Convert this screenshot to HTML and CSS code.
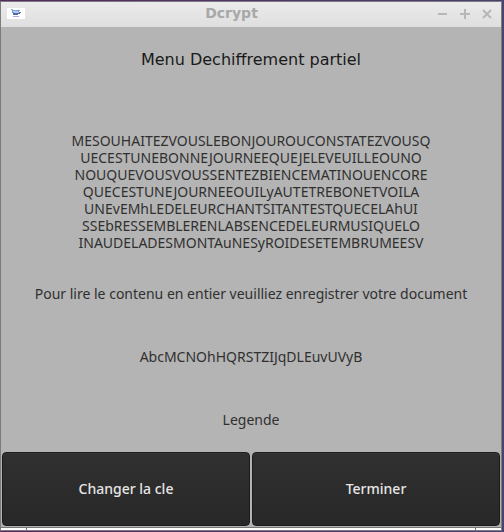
FILE: index.html
```html
<!DOCTYPE html>
<html lang="fr">
<head>
<meta charset="utf-8">
<title>Dcrypt</title>
<link rel="stylesheet" href="styles.css">
</head>
<body>
<div class="window">
  <header class="titlebar">
    <svg class="app-icon" viewBox="0 0 18 11" aria-hidden="true">
      <path fill="#fff" d="M0 0h18v11H0z"/>
      <path fill="#82a9df" d="M4 1h2v1h7v1H5V2H4z"/>
      <path fill="#b5cce7" d="M5 3h7v2H5z"/>
      <path fill="#6f9bd2" d="M5 3h1v1h1v1H5zM9 2h3v2h-1V3H9z"/>
      <path fill="#5866b0" d="M6 5h6V4h2v1h-1v1h-2v1H6z"/>
      <path fill="#a8afe0" d="M6 8h6v1H6z"/>
    </svg>
    <h1 class="title">Dcrypt</h1>
    <div class="controls">
      <button class="control" type="button" aria-label="Réduire"><svg viewBox="0 0 10 10"><path d="M0 5h9"/></svg></button>
      <button class="control" type="button" aria-label="Agrandir"><svg viewBox="0 0 10 10"><path d="M0 5h10M5 0v10"/></svg></button>
      <button class="control" type="button" aria-label="Fermer"><svg viewBox="0 0 10 10"><path d="M1 1l8 8M9 1l-8 8"/></svg></button>
    </div>
  </header>
  <main class="content">
    <h2 class="heading">Menu Dechiffrement partiel</h2>
    <p class="message">MESOUHAITEZVOUSLEBONJOUROUCONSTATEZVOUSQ<br>UECESTUNEBONNEJOURNEEQUEJELEVEUILLEOUNO<br>NOUQUEVOUSVOUSSENTEZBIENCEMATINOUENCORE<br>QUECESTUNEJOURNEEOUILyAUTETREBONETVOILA<br>UNEvEMhLEDELEURCHANTSITANTESTQUECELAhUI<br>SSEbRESSEMBLERENLABSENCEDELEURMUSIQUELO<br>INAUDELADESMONTAuNESyROIDESETEMBRUMEESV</p>
    <p class="line">Pour lire le contenu en entier veuilliez enregistrer votre document</p>
    <p class="line">AbcMCNOhHQRSTZIJqDLEuvUVyB</p>
    <p class="line">Legende</p>
    <div class="actions">
      <button class="action" type="button">Changer la cle</button>
      <button class="action" type="button">Terminer</button>
    </div>
  </main>
  <footer class="grip"></footer>
</div>
</body>
</html>
```
FILE: styles.css
```css
* {
  box-sizing: border-box;
}

body {
  margin: 0;
  min-height: 100vh;
  display: flex;
  padding: 1px 2px 1px 0;
  background: linear-gradient(90deg, #56295f, #4a4272);
  color: #303030;
  font: 14px/17px "Noto Sans", sans-serif;
}

h1, h2, p {
  margin: 0;
}

.window {
  flex: 1;
  min-width: 0;
  display: flex;
  flex-direction: column;
  border: 1px solid #7d7b7d;
  background: #b4b4b4;
}

.titlebar {
  display: grid;
  grid-template-columns: auto 1fr auto;
  align-items: center;
  height: 25px;
  padding: 0 9px 2px 6px;
  background: linear-gradient(#ebebeb, #dedede);
}

.app-icon {
  width: 18px;
  height: 11px;
  shape-rendering: crispEdges;
}

.title {
  color: #a8a8a8;
  font: bold 14px/23px "DejaVu Sans", sans-serif;
  text-align: center;
}

.controls {
  display: flex;
  gap: 12px;
}

.control {
  display: flex;
  padding: 0;
  border: 0;
  background: none;
}

.control svg {
  width: 10px;
  height: 10px;
  fill: none;
  stroke: #b7b7b7;
  stroke-width: 2;
}

.content {
  flex: 1;
  display: flex;
  flex-direction: column;
  text-align: center;
}

.heading {
  padding: 21px 0 20px;
  color: #1a1a1a;
  font: 16px/24px "DejaVu Sans", sans-serif;
}

.message {
  padding: 40px 0 11px;
}

.line {
  padding: 23px 0;
}

.actions {
  flex: 1;
  display: grid;
  grid-template-columns: 1fr 1fr;
  gap: 2px;
  padding: 1px;
}

.action {
  padding: 0 0 2px;
  border: 1px solid #1c1c1c;
  border-radius: 4px;
  background: linear-gradient(#303030, #282828);
  box-shadow: inset 0 1px #363636;
  color: #e6e6e6;
  font: 500 14px/17px "Noto Sans", sans-serif;
}

.grip {
  display: flex;
  justify-content: space-between;
  height: 3px;
  padding: 0 25px;
  border-top: 1px solid #777;
  background: #fff;
}

.grip::before,
.grip::after {
  content: "";
  width: 1px;
  background: #777;
}
```
